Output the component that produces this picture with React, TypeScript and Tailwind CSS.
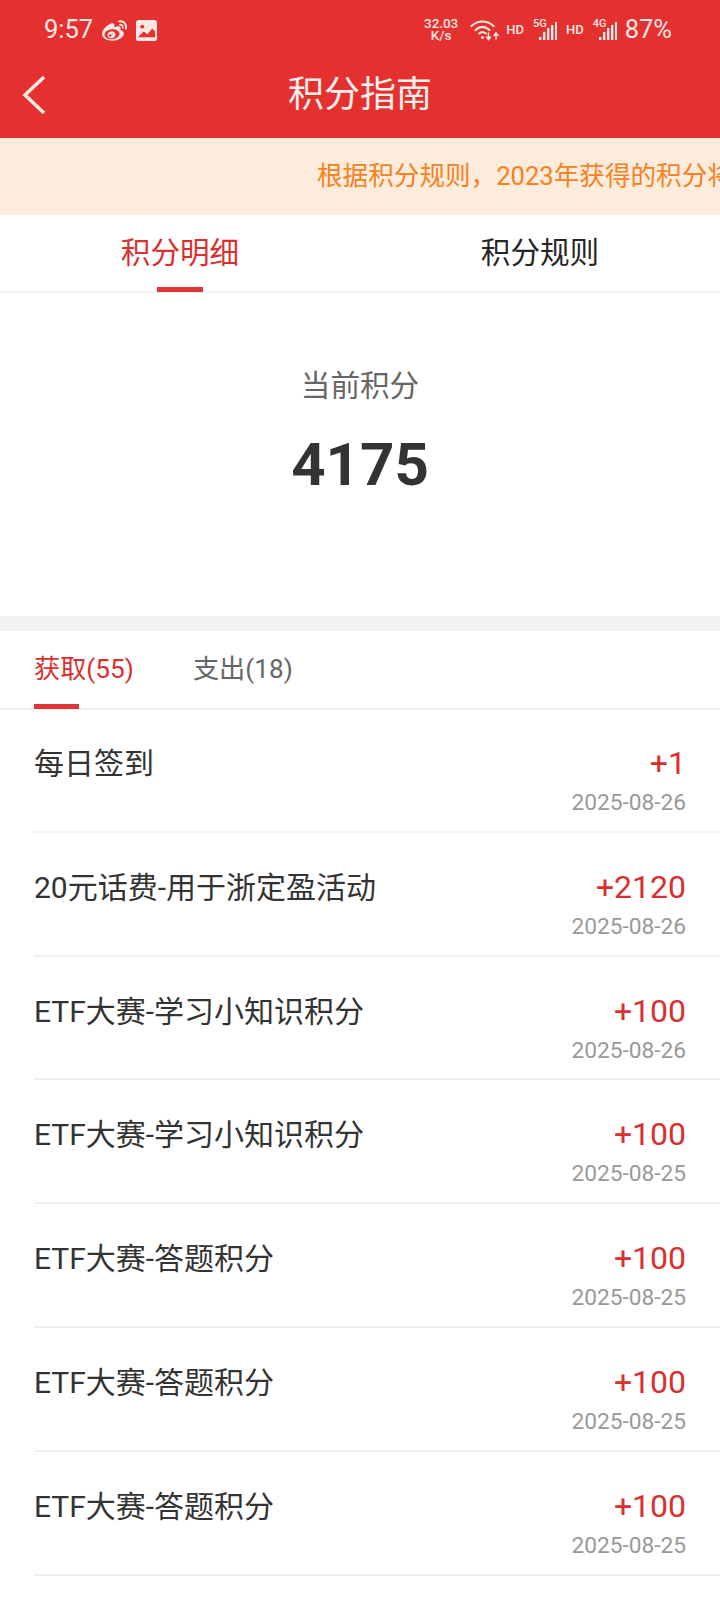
import { SiSinaweibo } from "react-icons/si";

const FONT = "font-['Roboto','Noto_Sans_CJK_SC',sans-serif]";

const RECORDS = [
  { title: "每日签到", points: "+1", date: "2025-08-26" },
  { title: "20元话费-用于浙定盈活动", points: "+2120", date: "2025-08-26" },
  { title: "ETF大赛-学习小知识积分", points: "+100", date: "2025-08-26" },
  { title: "ETF大赛-学习小知识积分", points: "+100", date: "2025-08-25" },
  { title: "ETF大赛-答题积分", points: "+100", date: "2025-08-25" },
  { title: "ETF大赛-答题积分", points: "+100", date: "2025-08-25" },
  { title: "ETF大赛-答题积分", points: "+100", date: "2025-08-25" },
];

function Signal({ label }: { label: string }) {
  return (
    <div className="relative h-[22px] w-[24px]">
      <span className="absolute left-0 top-[-1px] text-[11px] leading-[11px] font-medium">{label}</span>
      <svg viewBox="0 0 24 22" className="absolute inset-0 h-[22px] w-[24px]" fill="#fde9e4">
        <rect x="6" y="18" width="2.400" height="3" />
        <rect x="10" y="13" width="2.400" height="8" />
        <rect x="14" y="9" width="2.400" height="12" />
        <rect x="18" y="6" width="2.400" height="15" />
        <rect x="22" y="3" width="2" height="18" />
      </svg>
    </div>
  );
}

function Wifi() {
  return (
    <svg viewBox="0 0 29 22" className="h-[22px] w-[29px]" fill="none" stroke="#fde9e4" strokeLinecap="round">
      <path d="M1.500 7C8 1 17 1 23.500 7" strokeWidth="2.200" />
      <path d="M5.500 11C10 7 15 7 19.500 11" strokeWidth="2.200" />
      <path d="M9 14.500c2.500-2 4.500-2 7 0" strokeWidth="2" />
      <circle cx="12.500" cy="18.500" r="1.500" fill="#fde9e4" stroke="none" />
      <path d="M18.500 14v6M16.500 18l2 2.500 2-2.500" strokeWidth="1.500" />
      <path d="M26 20v-6M24 16.500l2-2.500 2 2.500" strokeWidth="1.500" />
    </svg>
  );
}

function StatusBar() {
  return (
    <div className="flex h-[60px] items-center justify-between pl-[44px] pr-[48px] text-[#fde9e4]">
      <div className="flex items-center">
        <span className="text-[25.500px] leading-none">9:57</span>
        <SiSinaweibo className="ml-[9px] h-[25px] w-[25px]" />
        <svg viewBox="0 0 22 22" className="ml-[9px] h-[21px] w-[21px]">
          <rect width="22" height="22" rx="3" fill="#fde9e4" />
          <circle cx="6.500" cy="7" r="2" fill="#e53030" />
          <path d="M2 18l6-6 4 3 5-6 3 3v6z" fill="#e53030" />
        </svg>
      </div>
      <div className="flex items-center">
        <div className="text-center text-[13.400px] leading-[12px] font-medium">
          <div>32.03</div>
          <div>K/s</div>
        </div>
        <div className="ml-[12px]">
          <Wifi />
        </div>
        <span className="ml-[7px] text-[13px] font-medium">HD</span>
        <div className="ml-[9px]">
          <Signal label="5G" />
        </div>
        <span className="ml-[9px] text-[13px] font-medium">HD</span>
        <div className="ml-[9px]">
          <Signal label="4G" />
        </div>
        <span className="ml-[8px] text-[25.500px] leading-none">87%</span>
      </div>
    </div>
  );
}

function NavBar() {
  return (
    <div className="relative flex h-[78px] items-center justify-center pb-[8px]">
      <svg viewBox="0 0 24 40" className="absolute left-[22px] top-[15px] h-[40px] w-[24px]" fill="none" stroke="#fde9e4" strokeWidth="3.500">
        <path d="M22 2L3 20l19 18" />
      </svg>
      <span className="text-[36px] leading-none text-[#fdf1ee]">积分指南</span>
    </div>
  );
}

export default function App() {
  return (
    <div className={`${FONT} h-[1600px] w-[720px] overflow-hidden bg-white`}>
      {/* Red header */}
      <div className="bg-[#e53030]">
        <StatusBar />
        <NavBar />
      </div>

      {/* Notice */}
      <div className="flex h-[77px] items-center overflow-hidden whitespace-nowrap bg-[#fdebdc] pl-[317px] text-[25.600px] text-[#f5811f]">
        根据积分规则，2023年获得的积分将于2025年底清零
      </div>

      {/* Main tabs */}
      <div className="flex h-[78px] border-b-2 border-[#f2f2f2]">
        <div className="relative flex flex-1 items-center justify-center text-[29.600px] text-[#d9302f]">
          积分明细
          <div className="absolute bottom-[-1px] left-[157px] h-[5px] w-[46px] bg-[#dc3636]" />
        </div>
        <div className="flex flex-1 items-center justify-center text-[29.600px] text-[#262626]">积分规则</div>
      </div>

      {/* Balance */}
      <div className="flex h-[323px] flex-col items-center pt-[75px]">
        <span className="text-[29.600px] leading-[36px] text-[#666666]">当前积分</span>
        <span className="mt-[26px] text-[60px] leading-[70px] font-bold text-[#333333]">4175</span>
      </div>

      <div className="h-[15px] bg-[#f2f2f2]" />

      {/* Sub tabs */}
      <div className="flex h-[79px] gap-[59px] border-b-2 border-[#f0f0f0] pl-[34px]">
        <div className="relative flex items-center text-[26.200px] text-[#d9302f]">
          获取(55)
          <div className="absolute bottom-[-1px] left-0 h-[5px] w-[45px] bg-[#dc3636]" />
        </div>
        <div className="flex items-center text-[26.200px] text-[#666666]">支出(18)</div>
      </div>

      {/* Records */}
      <div className="pl-[34px]">
        {RECORDS.map((r, i) => (
          <div key={i} className="flex h-[123.800px] items-start justify-between border-b-2 border-[#f0f0f0] pr-[34px] pt-[33px] first:h-[122.800px] first:pt-[32px]">
            <span className="mt-[2px] text-[30px] leading-[40px] text-[#333333]">{r.title}</span>
            <div className="-mt-[1px] flex flex-col items-end">
              <span className="text-[32px] leading-[44px] text-[#d9302f]">{r.points}</span>
              <span className="mt-[3px] text-[22.700px] leading-[30px] text-[#999999]">{r.date}</span>
            </div>
          </div>
        ))}
      </div>
    </div>
  );
}
